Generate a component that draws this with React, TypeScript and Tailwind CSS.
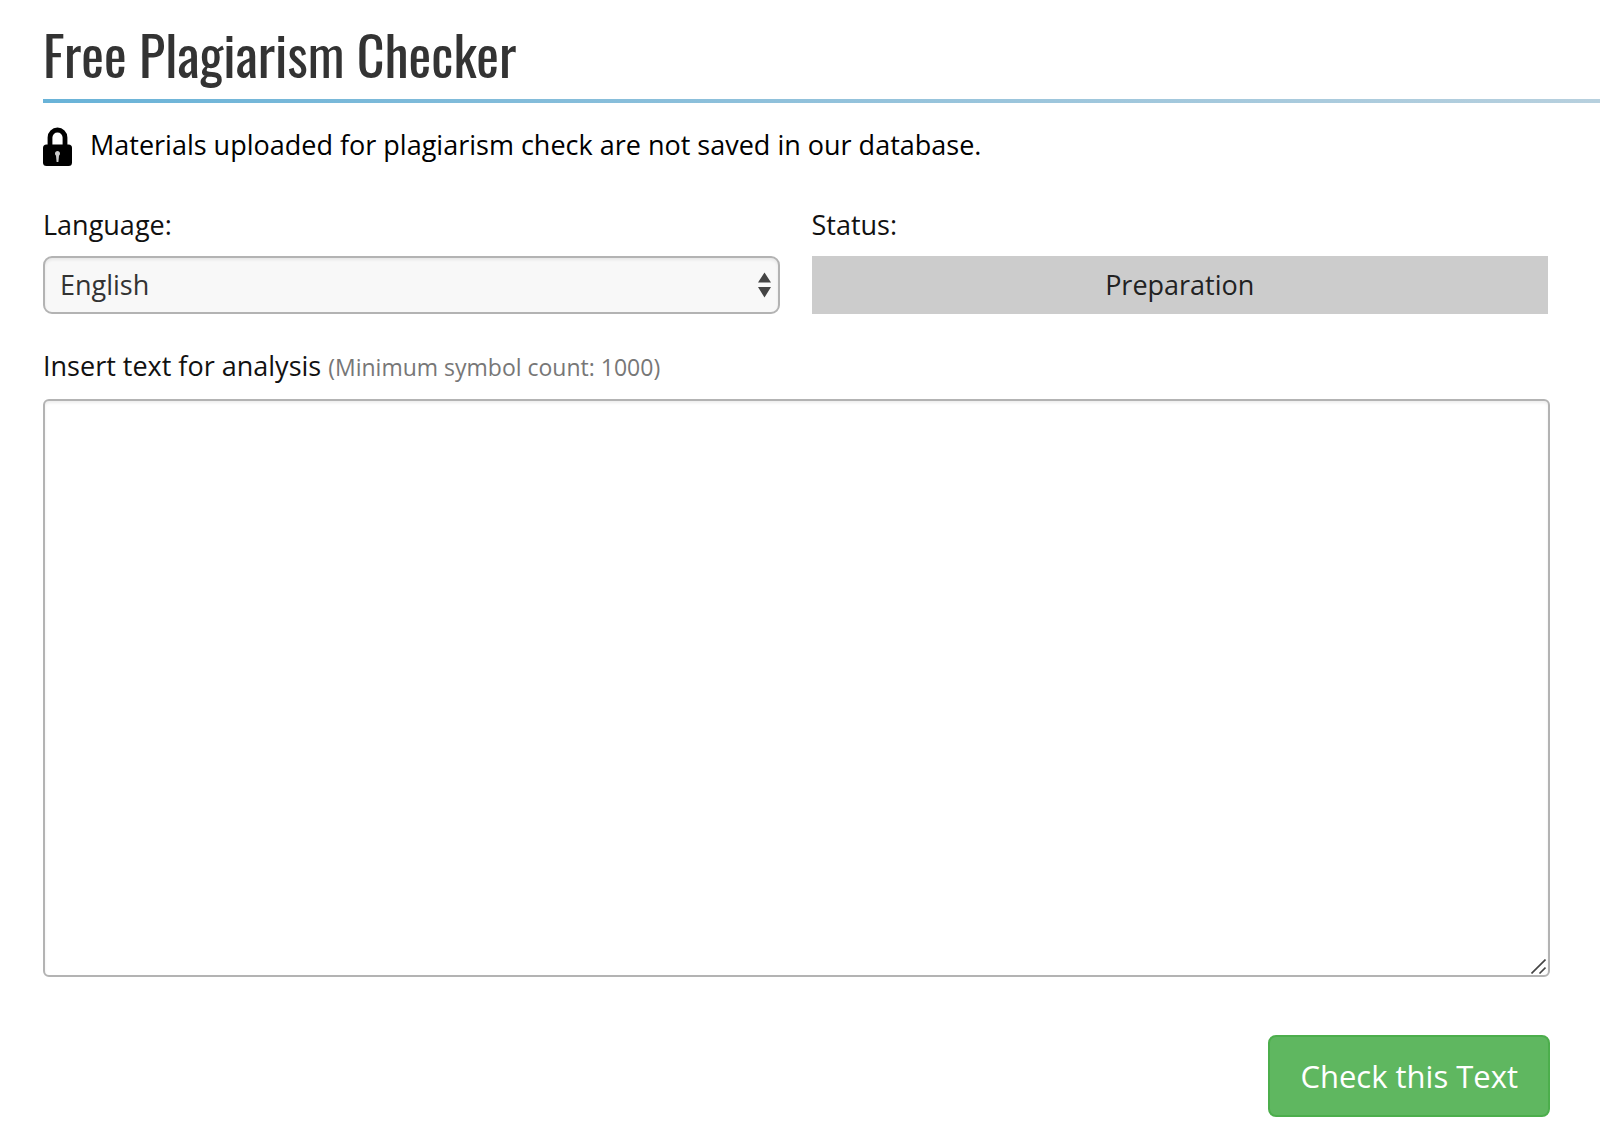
import { useState } from "react";

const languages = ["English", "German", "French", "Spanish"];

function LockIcon() {
  return (
    <svg width="29" height="39" viewBox="0 0 29 39" aria-hidden="true">
      <path
        d="M7 19V10.5a7.5 7.5 0 0 1 15 0V19"
        fill="none"
        stroke="#000"
        strokeWidth="4.8"
      />
      <rect x="0" y="17.5" width="29" height="21.5" rx="3.5" fill="#000" />
      <path
        d="M14.5 24a2.6 2.6 0 0 1 1.5 4.7L15.4 35h-1.8l-.6-6.3A2.6 2.6 0 0 1 14.5 24z"
        fill="#ccc"
      />
    </svg>
  );
}

export default function App() {
  const [language, setLanguage] = useState("English");
  const [text, setText] = useState("");

  return (
    <main className="bg-white pl-[43px] pt-4 pb-5 font-['Open_Sans','Noto_Sans',sans-serif] text-[27px] leading-10 text-[#111]">
      <h1 className="h-[83px] font-['Oswald','Liberation_Sans_Narrow',sans-serif] text-[54px] leading-[76px] text-[#333] whitespace-nowrap">
        Free Plagiarism Checker
      </h1>
      <div className="h-1 bg-linear-to-r from-[#69b3d8] to-[#b7d0de]" />

      <p className="mt-6 flex items-start gap-[18px] leading-9 text-black">
        <LockIcon />
        Materials uploaded for plagiarism check are not saved in our database.
      </p>

      <form className="mt-[39px] pr-[50px]" onSubmit={(e) => e.preventDefault()}>
        <div className="grid grid-cols-2 gap-8 pr-0.5">
          <div>
            <label htmlFor="language" className="block">
              Language:
            </label>
            <div className="relative mt-[11px]">
              <select
                id="language"
                value={language}
                onChange={(e) => setLanguage(e.target.value)}
                className="block h-[58px] w-full appearance-none rounded-[9px] border-2 border-[#b3b3b3] bg-[#f8f8f8] px-[15px] text-[#333] shadow-[inset_0_2px_3px_rgba(0,0,0,0.07)]"
              >
                {languages.map((l) => (
                  <option key={l}>{l}</option>
                ))}
              </select>
              <svg
                className="pointer-events-none absolute right-[9px] top-4"
                width="13"
                height="26"
                viewBox="0 0 13 26"
                fill="#444"
                aria-hidden="true"
              >
                <path d="M6.5 0.5L13 10.5H0zM0 15h13L6.5 25.5z" />
              </svg>
            </div>
          </div>

          <div>
            <div id="status-label">Status:</div>
            <div
              role="status"
              aria-labelledby="status-label"
              className="mt-[11px] flex h-[58px] items-center justify-center bg-[#ccc] text-[#222]"
            >
              Preparation
            </div>
          </div>
        </div>

        <label htmlFor="content" className="mt-8 block">
          Insert text for analysis{" "}
          <small className="text-[23px] text-[#777]">
            (Minimum symbol count: 1000)
          </small>
        </label>
        <div className="relative mt-3">
          <textarea
            id="content"
            value={text}
            onChange={(e) => setText(e.target.value)}
            className="block h-[578px] w-full resize-none rounded-md border-2 border-[#b3b3b3] bg-white px-4 py-3 shadow-[inset_0_2px_3px_rgba(0,0,0,0.07)]"
          />
          {/* Resize grip */}
          <svg
            className="pointer-events-none absolute bottom-[3px] right-1"
            width="15"
            height="15"
            viewBox="0 0 15 15"
            stroke="#444"
            strokeWidth="1.6"
            aria-hidden="true"
          >
            <path d="M0.5 14.5L14.5 0.5M8.5 14.5L14.5 8.5" />
          </svg>
        </div>

        <div className="mt-[58px] flex justify-end">
          <button
            type="submit"
            className="h-[82px] rounded-lg border-2 border-[#4cae4c] bg-[#5fb760] px-[30px] text-[31px] text-white"
          >
            Check this Text
          </button>
        </div>
      </form>
    </main>
  );
}
